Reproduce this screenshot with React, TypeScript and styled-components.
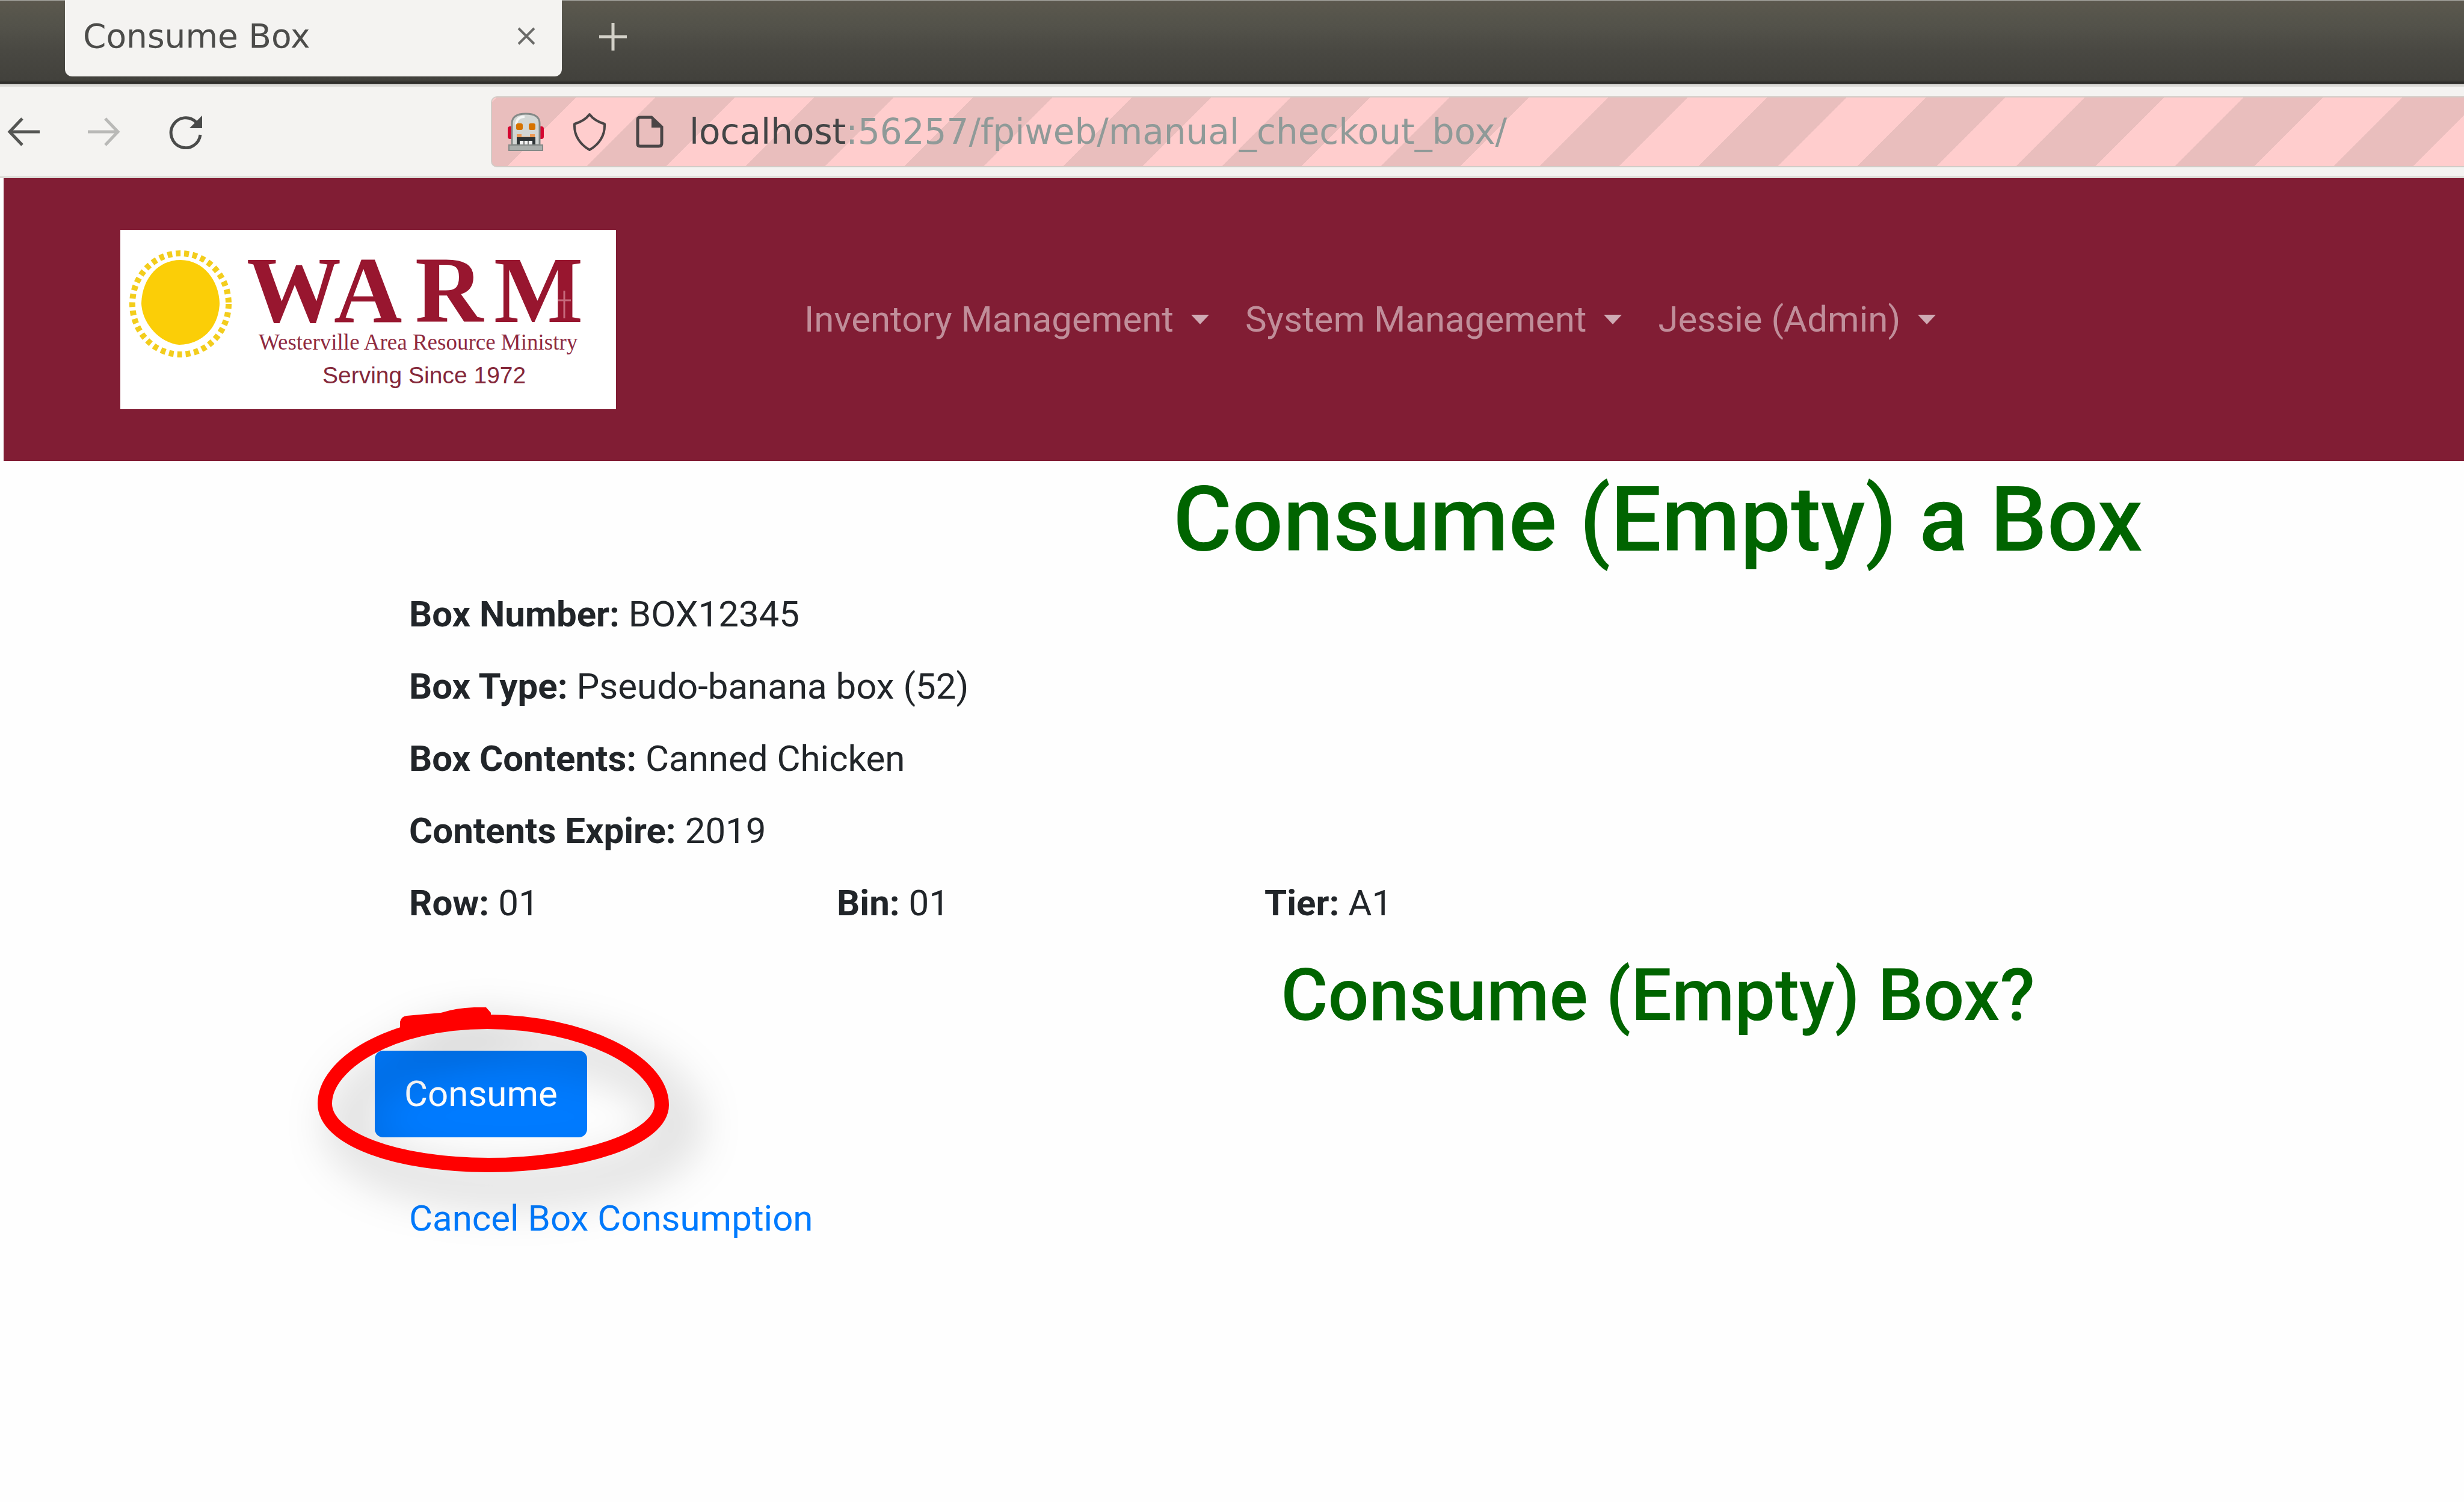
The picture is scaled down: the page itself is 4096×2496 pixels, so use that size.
import React from "react";
import styled, { createGlobalStyle } from "styled-components";

const GlobalStyle = createGlobalStyle`
  *, *::before, *::after { box-sizing: border-box; }
  html { overflow-x: hidden; }
  body {
    margin: 0;
    background: #fefefe;
    color: #212529;
    font-family: Roboto, "Liberation Sans", sans-serif;
    font-size: 60px;
    line-height: 90px;
  }
  button { font: inherit; border: 0; padding: 0; background: none; cursor: pointer; }
  svg { display: block; }
`;

const chromeFont = `"DejaVu Sans", sans-serif`;

const TabStrip = styled.div`
  display: flex;
  align-items: flex-start;
  height: 140px;
  padding-left: 108px;
  border-top: 2px solid #96958f;
  background: linear-gradient(#5c584e, #55544b 20%, #53524a 30%, #494842 60%, #42413c 95%, #2d2c29 98%, #3b3a37);
`;

const Tab = styled.div`
  display: flex;
  align-items: center;
  justify-content: space-between;
  width: 826px;
  height: 127px;
  margin-top: -2px;
  padding: 0 44px 8px 30px;
  border-radius: 0 0 12px 12px;
  background: #f4f3f1;
  color: #4c4c4a;
  font-family: ${chromeFont};
  font-size: 55px;
  line-height: 64px;
`;

const NewTab = styled.button`
  display: flex;
  margin-left: 62px;
  padding-top: 36px;
`;

const Toolbar = styled.div`
  display: flex;
  align-items: center;
  height: 156px;
  padding-left: 12px;
  border-top: 4px solid #dad9d6;
  border-bottom: 3px solid #dcdad6;
  background: #f4f3f1;
`;

const ToolButtons = styled.div`
  display: flex;
  align-items: center;
  gap: 80px;
  width: 804px;
`;

const AddressBar = styled.div`
  display: flex;
  flex: 1;
  align-items: center;
  height: 118px;
  padding-left: 26px;
  border: 2px solid #d3cbc6;
  border-right: 0;
  border-radius: 10px 0 0 10px;
  background: linear-gradient(135deg, #e9bebd 25%, #ffcdcd 25% 50%, #e9bebd 50% 75%, #ffcdcd 75%) 8px 0 / 264px 264px;
`;

const SiteIcons = styled.div`
  display: flex;
  align-items: center;
  gap: 48px;
  margin-right: 42px;
`;

const Address = styled.div`
  color: #8f9a98;
  font-family: ${chromeFont};
  font-size: 58px;
  line-height: 68px;
  white-space: nowrap;
`;

const Host = styled.span`
  color: #434546;
`;

const Navbar = styled.nav`
  display: flex;
  align-items: center;
  gap: 313px;
  height: 470px;
  margin-left: 6px;
  padding-left: 194px;
  background: #811d34;
`;

const NavMenu = styled.div`
  display: flex;
  gap: 60px;
`;

const NavToggle = styled.button`
  display: flex;
  align-items: center;
  gap: 29px;
  color: #c08e9a;

  &::after {
    content: "";
    border: 15px solid transparent;
    border-top: 16px solid #cfaab3;
    border-bottom: 0;
  }
`;

const Page = styled.main`
  overflow: hidden;
  padding: 8px 0 400px 623px;
`;

const Container = styled.div`
  width: 4266px;
`;

const Heading = styled.h1`
  margin: 0 0 22px;
  color: #006400;
  font-size: 150px;
  font-weight: 500;
  line-height: 180px;
  text-align: center;
`;

const Question = styled.h2`
  margin: 36px 0 20px;
  color: #006400;
  font-size: 120px;
  font-weight: 500;
  line-height: 144px;
  text-align: center;
`;

const Row = styled.div`
  display: grid;
  grid-template-columns: repeat(6, 1fr);
  margin-bottom: 30px;
`;

const Field = styled.div<{ $wide?: boolean }>`
  grid-column: ${(p) => (p.$wide ? "1 / -1" : "auto")};
  padding: 0 57px;
`;

const Actions = styled.div`
  position: relative;
  display: flex;
  margin-bottom: 90px;
`;

const PrimaryButton = styled.button`
  height: 144px;
  padding: 0 49px;
  border-radius: 14px;
  background: #007bff;
  color: #fff;
`;

const Marker = styled.svg`
  position: absolute;
  top: -72px;
  left: -95px;
  overflow: visible;
  pointer-events: none;
  filter: drop-shadow(34px 36px 40px rgba(0, 0, 0, 0.34));
`;

const CancelLink = styled.a`
  margin-left: 57px;
  color: #007bff;
  text-decoration: none;
`;

const Back = ({ color }: { color: string }) => (
  <svg width="54" height="50" viewBox="0 0 54 50" fill="none" stroke={color} strokeWidth="5">
    <path d="M54 25H5M25 3L4 25l21 22" />
  </svg>
);

const Forward = ({ color }: { color: string }) => (
  <svg width="54" height="50" viewBox="0 0 54 50" fill="none" stroke={color} strokeWidth="5">
    <path d="M0 25h49M29 3l21 22-21 22" />
  </svg>
);

const Reload = () => (
  <svg width="58" height="58" viewBox="0 0 58 58" fill="none">
    <path d="M46 13A24.500 25 0 1 0 53 34" stroke="#4a4b4a" strokeWidth="5" />
    <path d="M56 2v21H35z" fill="#4a4b4a" />
  </svg>
);

const Robot = () => (
  <svg width="60" height="64" viewBox="0 0 60 64">
    <rect x="0" y="23" width="9" height="21" rx="4" fill="#d5052f" />
    <rect x="51" y="23" width="9" height="21" rx="4" fill="#d5052f" />
    <path d="M7 54V18Q7 2 30 2T53 18V54z" fill="#d3d7d5" stroke="#858a88" strokeWidth="3" />
    <path d="M14 20Q15 7 28 7" fill="none" stroke="#f4f6f5" strokeWidth="4" />
    <rect x="14" y="18" width="11" height="11" rx="3" fill="#d67300" />
    <rect x="35" y="18" width="11" height="11" rx="3" fill="#d67300" />
    <path d="M15 36h8v4h14v-4h8v6H15z" fill="#ed9a55" />
    <path d="M15 41h31v12H15z" fill="#2e3436" />
    <path d="M20 47h21v7H20z" fill="#f3f3f3" />
    <path d="M27 47v7M34 47v7" stroke="#777" strokeWidth="2" />
    <path d="M2 54h56v9H2z" fill="#a9adab" stroke="#858a88" strokeWidth="2" />
  </svg>
);

const Shield = () => (
  <svg width="56" height="64" viewBox="0 0 56 64" fill="none" stroke="#4a4546" strokeWidth="4" strokeLinejoin="round">
    <path d="M28 3C22 11 13 16 3 19 2 38 12 53 28 62 44 53 54 38 53 19 43 16 34 11 28 3z" />
  </svg>
);

const Document = () => (
  <svg width="48" height="56" viewBox="0 0 48 56">
    <path d="M8 4H27L44 20V47Q44 52 39 52H8Q4 52 4 48V8Q4 4 8 4z" fill="none" stroke="#4a4546" strokeWidth="5" />
    <path d="M27 3L46 21H27z" fill="#4a4546" />
  </svg>
);

const Logo = () => (
  <svg width="824" height="298" viewBox="0 0 824 298" role="img" aria-label="WARM">
    <rect width="824" height="298" fill="#fff" />
    <path d="M100 50C138 50 164 84 165 122 164 160 138 190 98 191 66 188 36 156 35 122 36 82 62 50 100 50z" fill="#fbce07" />
    <ellipse cx="100" cy="123" rx="80" ry="84" fill="none" stroke="#f3cd1c" strokeWidth="10" strokeDasharray="8 6" />
    <text x="210 355 490 621" y="153" fill="#98162f" fontFamily="'Liberation Serif', serif" fontWeight="700" fontSize="157">
      WARM
    </text>
    <path d="M727 117h22M738 101v46" stroke="#c66a7c" strokeWidth="3" />
    <text x="230" y="199" fill="#8f2a40" fontFamily="'Liberation Serif', serif" fontSize="37">
      Westerville Area Resource Ministry
    </text>
    <text x="336" y="255" fill="#84283a" fontFamily="'Liberation Sans', sans-serif" fontSize="39">
      Serving Since 1972
    </text>
  </svg>
);

const menus = ["Inventory Management", "System Management", "Jessie (Admin)"];

const details = [
  { label: "Box Number:", value: "BOX12345" },
  { label: "Box Type:", value: "Pseudo-banana box (52)" },
  { label: "Box Contents:", value: "Canned Chicken" },
  { label: "Contents Expire:", value: "2019" },
];

const location = [
  { label: "Row:", value: "01" },
  { label: "Bin:", value: "01" },
  { label: "Tier:", value: "A1" },
];

export default function App() {
  return (
    <>
      <GlobalStyle />
      <TabStrip>
        <Tab>
          <span>Consume Box</span>
          <button aria-label="Close tab">
            <svg width="30" height="32" viewBox="0 0 30 32" stroke="#6a6a68" strokeWidth="4">
              <path d="M2 3l26 26M28 3L2 29" />
            </svg>
          </button>
        </Tab>
        <NewTab aria-label="New tab">
          <svg width="46" height="46" viewBox="0 0 46 46" stroke="#d3d1c8" strokeWidth="5">
            <path d="M23 0v46M0 23h46" />
          </svg>
        </NewTab>
      </TabStrip>
      <Toolbar>
        <ToolButtons>
          <button aria-label="Back"><Back color="#555654" /></button>
          <button aria-label="Forward"><Forward color="#b9b9b7" /></button>
          <button aria-label="Reload"><Reload /></button>
        </ToolButtons>
        <AddressBar>
          <SiteIcons>
            <Robot />
            <Shield />
            <Document />
          </SiteIcons>
          <Address role="textbox" aria-label="Address">
            <Host>localhost</Host>:56257/fpiweb/manual_checkout_box/
          </Address>
        </AddressBar>
      </Toolbar>
      <Navbar>
        <Logo />
        <NavMenu>
          {menus.map((name) => (
            <NavToggle key={name}>{name}</NavToggle>
          ))}
        </NavMenu>
      </Navbar>
      <Page>
        <Container>
          <Heading>Consume (Empty) a Box</Heading>
          {details.map(({ label, value }) => (
            <Row key={label}>
              <Field $wide>
                <strong>{label}</strong> {value}
              </Field>
            </Row>
          ))}
          <Row>
            {location.map(({ label, value }) => (
              <Field key={label}>
                <strong>{label}</strong> {value}
              </Field>
            ))}
          </Row>
          <Question>Consume (Empty) Box?</Question>
          <Actions>
            <PrimaryButton>Consume</PrimaryButton>
            <Marker width="584" height="275" viewBox="0 0 584 275" fill="none" stroke="#f00" strokeWidth="24">
              <path d="M282 24C440 24 572 90 572 162 572 218 440 262 284 262 130 262 12 218 12 160 12 95 120 24 282 24z" />
              <path d="M137 38V24Q139 15 148 14L205 9Q230 1 260 0H280L288 9V26H200z" fill="#f00" stroke="none" />
            </Marker>
          </Actions>
          <CancelLink href="#cancel">Cancel Box Consumption</CancelLink>
        </Container>
      </Page>
    </>
  );
}
